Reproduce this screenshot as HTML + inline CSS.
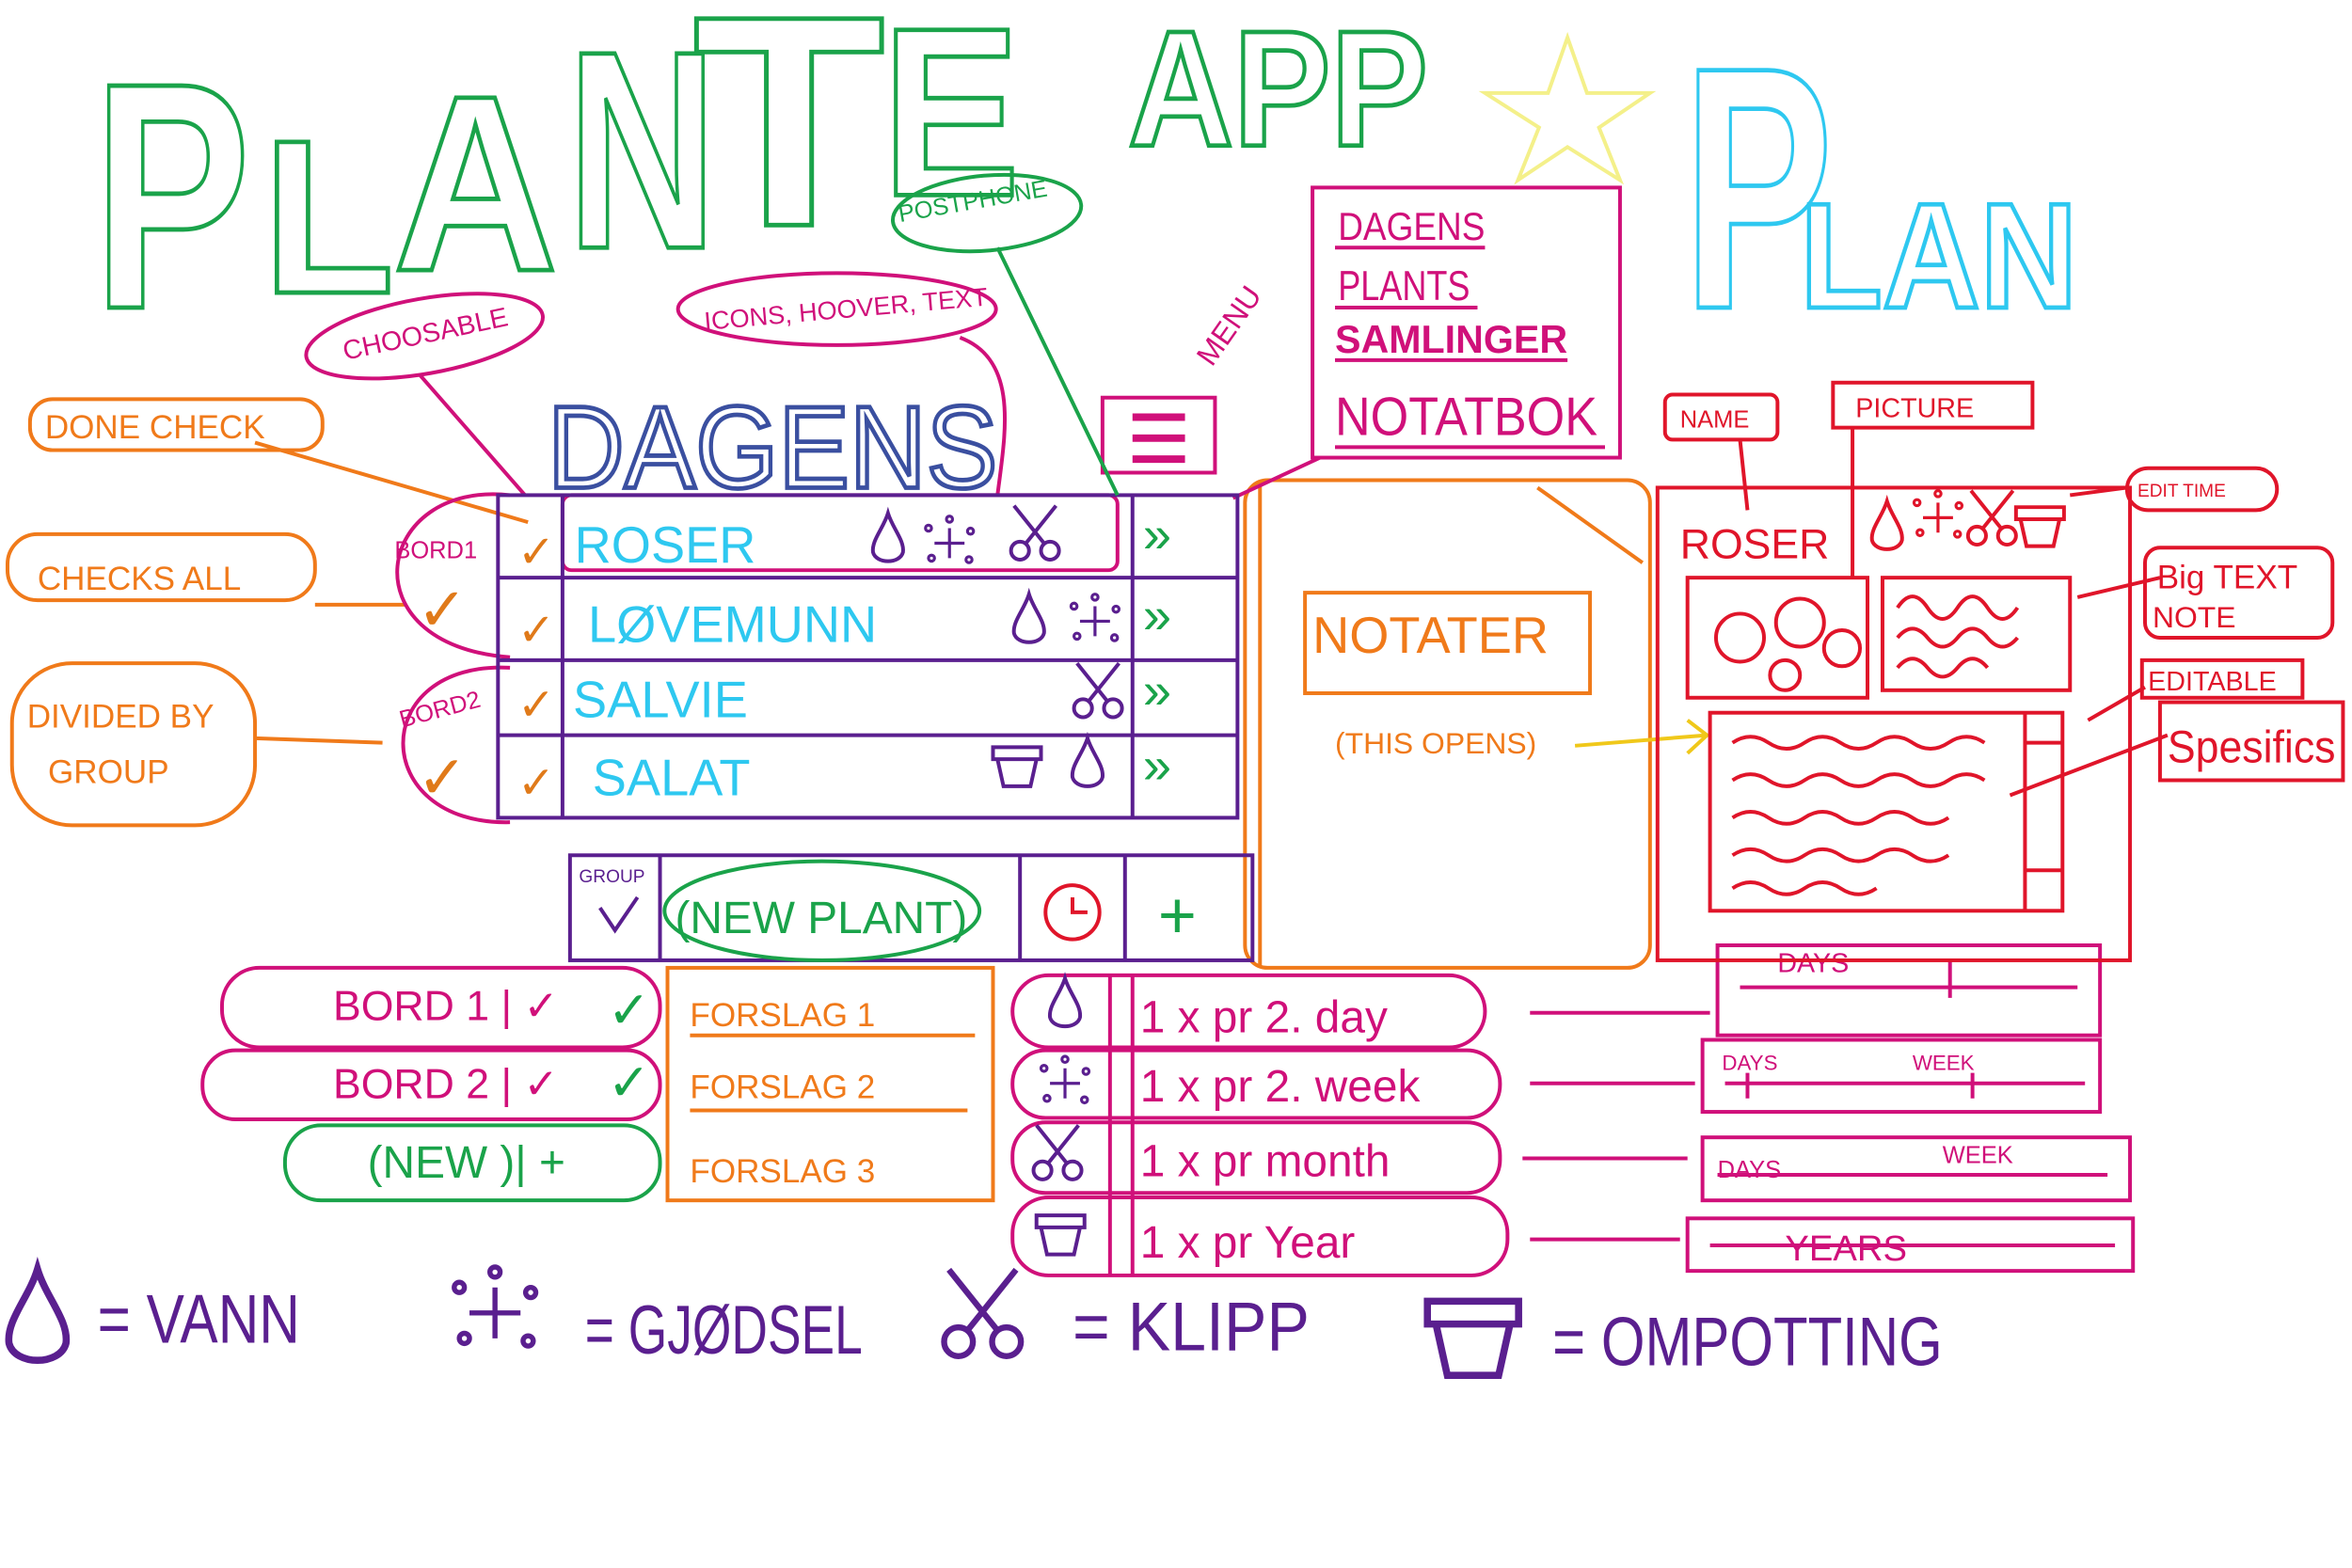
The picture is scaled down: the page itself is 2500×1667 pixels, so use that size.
<!DOCTYPE html>
<html><head><meta charset="utf-8"><style>html,body{margin:0;padding:0;background:#fff}svg{display:block}text{font-family:"Liberation Sans",sans-serif}</style></head><body>
<svg width="2500" height="1667" viewBox="0 0 1568 1045" preserveAspectRatio="none" xmlns="http://www.w3.org/2000/svg">
<defs>
<g id="drop"><path d="M0,-18 C-3,-8 -11,0 -10,8 C-8,16 8,16 10,8 C11,0 3,-8 0,-18Z" fill="none" stroke-width="2.5"/></g>
<g id="scis" fill="none" stroke-width="2.5"><circle cx="-10" cy="12" r="6"/><circle cx="10" cy="12" r="6"/><path d="M-6,7 L14,-18 M6,7 L-14,-18"/></g>
<g id="pot" fill="none" stroke-width="2.5"><path d="M-16,-12 H16 V-4 H-16Z M-13,-4 L-9,14 H9 L13,-4"/></g>
<g id="fert" fill="none" stroke-width="2"><path d="M0,-10 V10 M-10,0 H10"/><circle cx="-14" cy="-10" r="2"/><circle cx="14" cy="-8" r="2"/><circle cx="-12" cy="10" r="2"/><circle cx="13" cy="11" r="2"/><circle cx="0" cy="-16" r="2"/></g>
</defs>
<rect width="1568" height="1045" fill="#fff"/>
<!-- Title -->
<g font-weight="bold" fill="none" stroke="#1aa34a" stroke-width="3" lengthAdjust="spacingAndGlyphs">
<text x="62" y="205" font-size="215" textLength="105" lengthAdjust="spacingAndGlyphs">P</text>
<text x="175" y="195" font-size="146" textLength="88" lengthAdjust="spacingAndGlyphs">L</text>
<text x="262" y="180" font-size="167" textLength="110" lengthAdjust="spacingAndGlyphs">A</text>
<text x="378" y="165" font-size="188" textLength="100" lengthAdjust="spacingAndGlyphs">N</text>
<text x="462" y="150" font-size="200" textLength="128" lengthAdjust="spacingAndGlyphs">T</text>
<text x="588" y="130" font-size="160" textLength="92" lengthAdjust="spacingAndGlyphs">E</text>
</g>
<text x="752" y="97" font-size="110" font-weight="bold" textLength="200" lengthAdjust="spacingAndGlyphs" fill="none" stroke="#1aa34a" stroke-width="3">APP</text>
<path d="M1045,25 L1058,62 L1100,62 L1066,85 L1080,120 L1045,98 L1012,120 L1026,85 L990,62 L1032,62Z" fill="none" stroke="#f4f08a" stroke-width="2.5"/>
<text x="1122" y="205" font-size="230" textLength="100" lengthAdjust="spacingAndGlyphs" fill="none" stroke="#2ec8f0" stroke-width="3" font-weight="bold">P</text>
<text x="1200" y="205" font-size="100" textLength="185" lengthAdjust="spacingAndGlyphs" fill="none" stroke="#2ec8f0" stroke-width="3" font-weight="bold">LAN</text>
<!-- DAGENS -->
<text x="365" y="325" font-size="78" textLength="300" lengthAdjust="spacingAndGlyphs" fill="none" stroke="#3a4fa0" stroke-width="3">DAGENS</text>
<!-- annotations -->
<g fill="none" stroke="#f07a1a" stroke-width="2.5">
<rect x="20" y="266" width="195" height="34" rx="15"/>
<rect x="5" y="356" width="205" height="44" rx="20"/>
<rect x="8" y="442" width="162" height="108" rx="40"/>
<path d="M170,295 L352,348 M210,403 L270,403 M170,492 L255,495"/>
<rect x="830" y="320" width="270" height="325" rx="15"/>
<path d="M840,320 V645 M1025,325 L1095,375"/>
<rect x="870" y="395" width="190" height="67"/>
<rect x="445" y="645" width="217" height="155"/>
<path d="M460,690 H650 M460,740 H645"/>
</g>
<g fill="#f07a1a" font-size="22">
<text x="30" y="292">DONE CHECK</text>
<text x="25" y="393">CHECKS ALL</text>
<text x="18" y="485">DIVIDED BY</text>
<text x="32" y="522">GROUP</text>
<text x="875" y="435" font-size="34">NOTATER</text>
<text x="890" y="502" font-size="20">(THIS OPENS)</text>
<text x="460" y="684" font-size="22">FORSLAG 1</text>
<text x="460" y="732" font-size="22">FORSLAG 2</text>
<text x="460" y="788" font-size="22">FORSLAG 3</text>
</g>
<path d="M1050,497 L1138,490 M1125,480 L1138,490 L1125,502" fill="none" stroke="#f0c81a" stroke-width="2.5"/>
<!-- pink -->
<g fill="none" stroke="#d0107a" stroke-width="2.5">
<ellipse cx="283" cy="224" rx="80" ry="25" transform="rotate(-10 283 224)"/>
<path d="M280,250 L350,330"/>
<path d="M340,330 C250,320 230,430 340,438"/>
<path d="M340,445 C245,440 245,550 340,548"/>
<rect x="375" y="330" width="370" height="50" rx="6"/>
<rect x="148" y="645" width="292" height="53" rx="25"/>
<rect x="135" y="700" width="305" height="46" rx="22"/>
<rect x="675" y="650" width="315" height="48" rx="24"/>
<rect x="675" y="700" width="325" height="45" rx="22"/>
<rect x="675" y="748" width="325" height="47" rx="22"/>
<rect x="675" y="798" width="330" height="52" rx="24"/>
<path d="M740,650 V850 M755,650 V850 M1020,675 H1140 M1020,722 H1130 M1015,772 H1125 M1020,826 H1120"/>
<rect x="1145" y="630" width="255" height="60"/>
<rect x="1135" y="693" width="265" height="48"/>
<rect x="1135" y="758" width="285" height="42"/>
<rect x="1125" y="812" width="297" height="35"/>
<path d="M1160,658 H1385 M1150,722 H1390 M1145,783 H1405 M1140,830 H1410 M1300,640 V665 M1165,715 V732 M1315,715 V732"/>
<rect x="875" y="125" width="205" height="180"/>
<path d="M880,305 L822,332 M890,165 H990 M890,205 H985 M890,240 H1045 M890,298 H1070"/>
<rect x="735" y="265" width="75" height="50"/>
<path d="M755,278 H790 M755,292 H790 M755,306 H790" stroke-width="5"/>
<ellipse cx="558" cy="206" rx="106" ry="24"/>
<path d="M640,225 C680,240 670,290 665,330"/>
</g>
<g fill="#d0107a">
<text x="230" y="240" font-size="18" transform="rotate(-12 230 240)">CHOOSABLE</text>
<text x="263" y="372" font-size="16">BORD1</text>
<text x="268" y="485" font-size="16" transform="rotate(-15 268 485)">BORD2</text>
<text x="222" y="680" font-size="28">BORD 1 | ✓</text>
<text x="222" y="732" font-size="28">BORD 2 | ✓</text>
<text x="760" y="688" font-size="30">1 x pr 2. day</text>
<text x="760" y="734" font-size="30">1 x pr 2. week</text>
<text x="760" y="784" font-size="30">1 x pr month</text>
<text x="760" y="838" font-size="30">1 x pr Year</text>
<text x="1185" y="648" font-size="18">DAYS</text>
<text x="1148" y="713" font-size="14">DAYS</text>
<text x="1275" y="713" font-size="14">WEEK</text>
<text x="1145" y="785" font-size="16">DAYS</text>
<text x="1295" y="775" font-size="16">WEEK</text>
<text x="1190" y="840" font-size="24">YEARS</text>
<text x="892" y="160" font-size="26" textLength="98" lengthAdjust="spacingAndGlyphs">DAGENS</text>
<text x="892" y="200" font-size="28" textLength="88" lengthAdjust="spacingAndGlyphs">PLANTS</text>
<text x="890" y="235" font-size="26" font-weight="bold" textLength="155" lengthAdjust="spacingAndGlyphs">SAMLINGER</text>
<text x="890" y="290" font-size="36" textLength="175" lengthAdjust="spacingAndGlyphs">NOTATBOK</text>
<text x="808" y="245" font-size="20" transform="rotate(-55 808 245)">MENU</text>
<text x="470" y="220" font-size="17" transform="rotate(-5 470 220)">ICONS, HOOVER, TEXT</text>
</g>
<!-- red detail -->
<g fill="none" stroke="#e0152a" stroke-width="2.5">
<rect x="1105" y="325" width="315" height="315"/>
<rect x="1110" y="263" width="75" height="30" rx="5"/>
<rect x="1222" y="255" width="133" height="30"/>
<path d="M1160,293 L1165,340 M1235,285 V385 M1380,330 L1418,325 M1385,398 L1440,385 M1340,530 L1445,490 M1392,480 L1430,458"/>
<rect x="1125" y="385" width="120" height="80"/>
<rect x="1255" y="385" width="125" height="75"/>
<rect x="1140" y="475" width="235" height="132"/>
<path d="M1350,475 V607 M1350,495 H1375 M1350,580 H1375"/>
<rect x="1418" y="312" width="100" height="28" rx="14"/>
<rect x="1430" y="365" width="125" height="60" rx="10"/>
<rect x="1428" y="440" width="107" height="25"/>
<rect x="1440" y="468" width="122" height="52"/>
<path d="M1265,405 q10,-15 20,0 t20,0 t20,0 t20,0 M1265,425 q10,-12 20,0 t20,0 t20,0 t20,0 M1265,445 q10,-12 20,0 t20,0 t20,0"/>
<path d="M1155,495 q12,-8 24,0 t24,0 t24,0 t24,0 t24,0 t24,0 t24,0 M1155,520 q12,-8 24,0 t24,0 t24,0 t24,0 t24,0 t24,0 t24,0 M1155,545 q12,-8 24,0 t24,0 t24,0 t24,0 t24,0 t24,0 M1155,570 q12,-8 24,0 t24,0 t24,0 t24,0 t24,0 t24,0 M1155,592 q12,-8 24,0 t24,0 t24,0 t24,0"/>
<circle cx="1160" cy="425" r="16"/><circle cx="1200" cy="415" r="16"/><circle cx="1228" cy="432" r="12"/><circle cx="1190" cy="450" r="10"/>
</g>
<g fill="#e0152a">
<text x="1120" y="285" font-size="16">NAME</text>
<text x="1237" y="278" font-size="18">PICTURE</text>
<text x="1120" y="372" font-size="28">ROSER</text>
<text x="1425" y="331" font-size="12">EDIT TIME</text>
<text x="1438" y="392" font-size="22">Big TEXT</text>
<text x="1435" y="418" font-size="20">NOTE</text>
<text x="1432" y="460" font-size="18">EDITABLE</text>
<text x="1445" y="508" font-size="30" textLength="112" lengthAdjust="spacingAndGlyphs">Spesifics</text>
<use href="#drop" x="1258" y="352" stroke="#e0152a"/>
<use href="#fert" x="1292" y="345" stroke="#e0152a"/>
<use href="#scis" x="1328" y="345" stroke="#e0152a"/>
<use href="#pot" x="1360" y="350" stroke="#e0152a"/>
</g>
<!-- main list purple -->
<g fill="none" stroke="#5a1f8f" stroke-width="2.5">
<rect x="332" y="330" width="493" height="215"/>
<path d="M332,385 H825 M332,440 H825 M332,490 H825 M375,330 V545 M755,330 V545"/>
<rect x="380" y="570" width="455" height="70"/>
<path d="M440,570 V640 M680,570 V640 M750,570 V640"/>
<ellipse cx="548" cy="607" rx="105" ry="33" stroke="#1aa34a"/>
<circle cx="715" cy="608" r="18" stroke="#e0152a"/>
<path d="M715,598 V608 H725" stroke="#e0152a"/>
<path d="M400,605 L410,620 L425,598" />
<use href="#drop" x="592" y="360" stroke="#5a1f8f"/>
<use href="#fert" x="633" y="362" stroke="#5a1f8f"/>
<use href="#scis" x="690" y="355" stroke="#5a1f8f"/>
<use href="#drop" x="686" y="414" stroke="#5a1f8f"/>
<use href="#fert" x="730" y="414" stroke="#5a1f8f"/>
<use href="#scis" x="732" y="460" stroke="#5a1f8f"/>
<use href="#pot" x="678" y="510" stroke="#5a1f8f"/>
<use href="#drop" x="725" y="510" stroke="#5a1f8f"/>
<use href="#drop" x="710" y="670" stroke="#5a1f8f"/>
<use href="#fert" x="710" y="722" stroke="#5a1f8f"/>
<use href="#scis" x="705" y="768" stroke="#5a1f8f"/>
<use href="#pot" x="707" y="822" stroke="#5a1f8f"/>
<use href="#drop" x="25" y="880" stroke="#5a1f8f" transform="translate(25 880) scale(1.9) translate(-25 -880)"/>
<use href="#fert" x="330" y="875" stroke="#5a1f8f" transform="translate(330 875) scale(1.7) translate(-330 -875)"/>
<use href="#scis" x="655" y="875" stroke="#5a1f8f" transform="translate(655 875) scale(1.6) translate(-655 -875)"/>
<use href="#pot" x="982" y="890" stroke="#5a1f8f" transform="translate(982 890) scale(1.9) translate(-982 -890)"/>
</g>
<g fill="#2ec8f0" font-size="34">
<text x="383" y="375">ROSER</text>
<text x="392" y="428">LØVEMUNN</text>
<text x="382" y="478">SALVIE</text>
<text x="395" y="530">SALAT</text>
</g>
<g fill="#e07a1a" font-size="30"><text x="345" y="378">✓</text><text x="345" y="430">✓</text><text x="345" y="480">✓</text><text x="345" y="532">✓</text><text x="278" y="420" font-size="40">✓</text><text x="278" y="532" font-size="40">✓</text></g>
<g fill="#1aa34a" font-size="34"><text x="762" y="368">»</text><text x="762" y="422">»</text><text x="762" y="472">»</text><text x="762" y="522">»</text>
<text x="450" y="622" font-size="30">(NEW PLANT)</text><text x="772" y="625" font-size="44">+</text>
<text x="245" y="785" font-size="30">(NEW )| +</text><text x="405" y="685" font-size="34">✓</text><text x="405" y="733" font-size="34">✓</text>
<text x="600" y="148" font-size="16" transform="rotate(-10 600 148)">POSTPHONE</text></g>
<g fill="none" stroke="#1aa34a" stroke-width="2.5"><rect x="190" y="750" width="250" height="50" rx="24"/><ellipse cx="658" cy="142" rx="63" ry="25" transform="rotate(-5 658 142)"/><path d="M665,165 L745,330"/></g>
<text x="386" y="588" font-size="12" fill="#5a1f8f">GROUP</text>
<g fill="#5a1f8f" font-size="46">
<text x="65" y="895" textLength="135" lengthAdjust="spacingAndGlyphs">= VANN</text>
<text x="390" y="902" textLength="185" lengthAdjust="spacingAndGlyphs">= GJØDSEL</text>
<text x="715" y="900" textLength="158" lengthAdjust="spacingAndGlyphs">= KLIPP</text>
<text x="1035" y="910" textLength="260" lengthAdjust="spacingAndGlyphs">= OMPOTTING</text>
</g>
</svg>
</body></html>
